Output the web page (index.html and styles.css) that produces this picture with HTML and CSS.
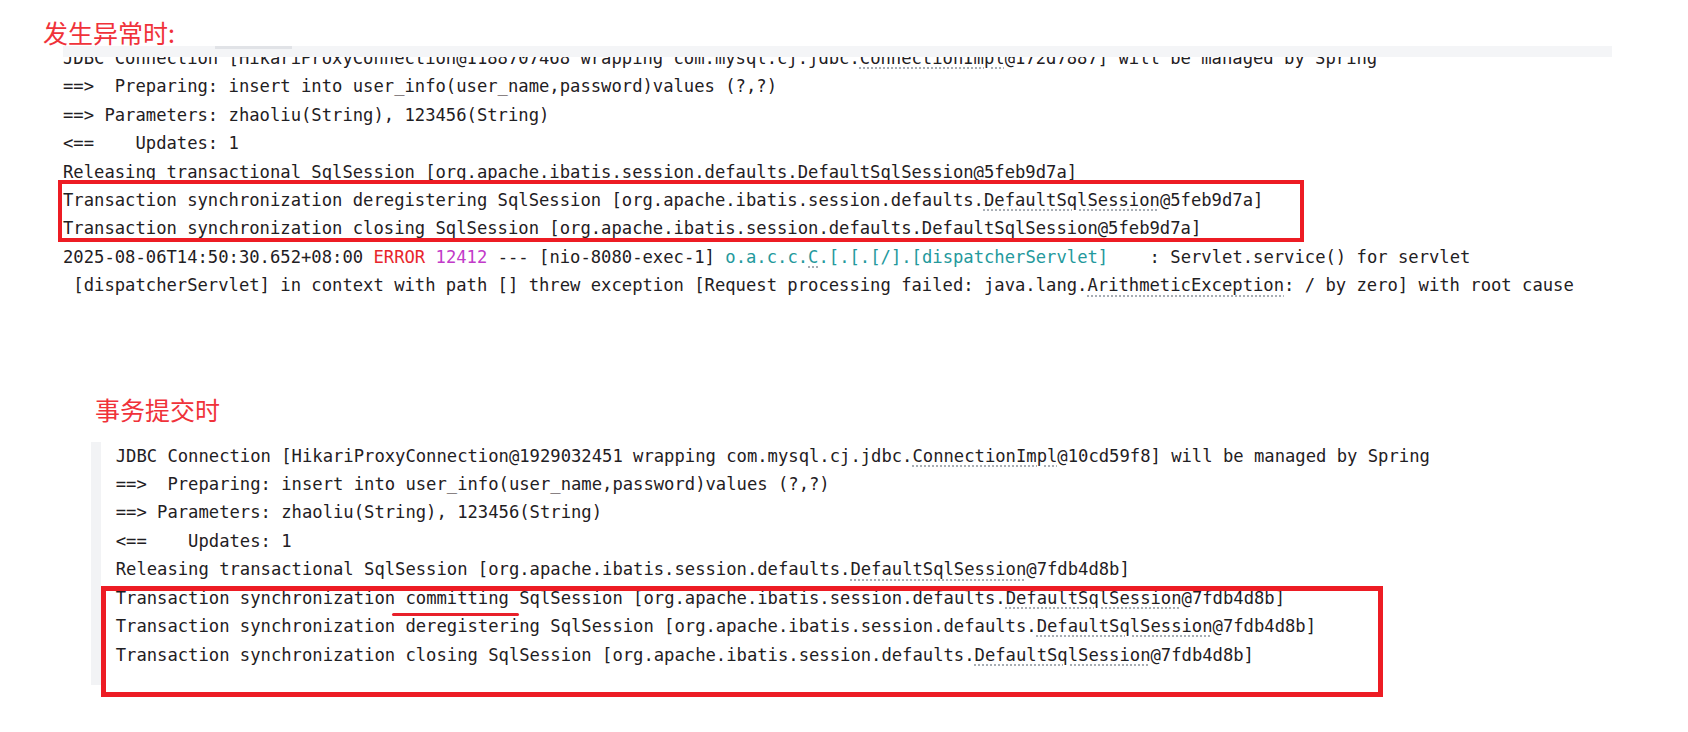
FILE: index.html
```html
<!DOCTYPE html>
<html lang="zh-CN">
<head>
    <meta charset="UTF-8">
    <meta name="viewport" content="width=device-width, initial-scale=1.0">
    <title>事务日志对比</title>
    <link rel="stylesheet" href="styles.css">
</head>
<body>

    <!-- 异常时的日志 -->
    <div class="section first">
        <div class="title">发生异常时:</div>
        <div class="log log-top">
            <div class="scroll-mask"><div class="thumb"></div></div>
            <div class="line">JDBC Connection [HikariProxyConnection@1188707468 wrapping com.mysql.cj.jdbc.<span class="link">ConnectionImpl</span>@172d7887] will be managed by Spring</div>
            <div class="line">==>  Preparing: insert into user_info(user_name,password)values (?,?)</div>
            <div class="line">==> Parameters: zhaoliu(String), 123456(String)</div>
            <div class="line">&lt;==    Updates: 1</div>
            <div class="line">Releasing transactional SqlSession [org.apache.ibatis.session.defaults.DefaultSqlSession@5feb9d7a]</div>
            <div class="line">Transaction synchronization deregistering SqlSession [org.apache.ibatis.session.defaults.<span class="link">DefaultSqlSession</span>@5feb9d7a]</div>
            <div class="line">Transaction synchronization closing SqlSession [org.apache.ibatis.session.defaults.DefaultSqlSession@5feb9d7a]</div>
            <div class="line">2025-08-06T14:50:30.652+08:00 <span class="lvl-error">ERROR</span> <span class="pid">12412</span> --- [nio-8080-exec-1] <span class="logger">o.a.c.c.<span class="link">C</span>.[.[.[/].[dispatcherServlet]</span>    : Servlet.service() for servlet</div>
            <div class="line"> [dispatcherServlet] in context with path [] threw exception [Request processing failed: java.lang.<span class="link">ArithmeticException</span>: / by zero] with root cause</div>
            <div class="box box-top"></div>
        </div>
    </div>

    <!-- 正常提交时的日志 -->
    <div class="section second">
        <div class="title">事务提交时</div>
        <div class="log log-bottom">
            <div class="line">JDBC Connection [HikariProxyConnection@1929032451 wrapping com.mysql.cj.jdbc.<span class="link">ConnectionImpl</span>@10cd59f8] will be managed by Spring</div>
            <div class="line">==>  Preparing: insert into user_info(user_name,password)values (?,?)</div>
            <div class="line">==> Parameters: zhaoliu(String), 123456(String)</div>
            <div class="line">&lt;==    Updates: 1</div>
            <div class="line">Releasing transactional SqlSession [org.apache.ibatis.session.defaults.<span class="link">DefaultSqlSession</span>@7fdb4d8b]</div>
            <div class="line">Transaction synchronization <span class="mark">committing</span> SqlSession [org.apache.ibatis.session.defaults.<span class="link">DefaultSqlSession</span>@7fdb4d8b]</div>
            <div class="line">Transaction synchronization deregistering SqlSession [org.apache.ibatis.session.defaults.<span class="link">DefaultSqlSession</span>@7fdb4d8b]</div>
            <div class="line">Transaction synchronization closing SqlSession [org.apache.ibatis.session.defaults.<span class="link">DefaultSqlSession</span>@7fdb4d8b]</div>
            <div class="box box-bottom"></div>
        </div>
    </div>

</body>
</html>
```

FILE: styles.css
```css
body {
    margin: 0;
    padding: 0 0 40px;
    background-color: #fff;
    color: #1f2023;
}
.title {
    font-family: "Noto Sans CJK SC", "Noto Sans", sans-serif;
    font-size: 25px;
    line-height: 24px;
    height: 24px;
    color: #f0323a;
}
.first {
    padding-top: 20px;
}
.first .title {
    margin-left: 43px;
}
.second {
    margin-top: 97px;
}
.second .title {
    margin-left: 95px;
    margin-bottom: 21px;
}
.log {
    position: relative;
    font-family: "DejaVu Sans Mono", "Liberation Mono", monospace;
    font-size: 17.2px;
    line-height: 28.4px;
}
.log .line {
    white-space: pre;
}
.log-top {
    margin-left: 63px;
}
.log-bottom {
    margin-left: 91px;
    border-left: 10px solid #f2f3f5;
    padding-left: 14.7px;
    padding-bottom: 16px;
}
/* grey strip hiding the top half of the first line */
.scroll-mask {
    position: absolute;
    left: 0;
    top: 2px;
    width: 1549px;
    height: 11px;
    background-color: #f4f5f7;
}
.scroll-mask .thumb {
    margin-left: 152px;
    width: 77px;
    height: 3px;
    background-color: #e1e3e7;
}
.link {
    text-decoration: underline dotted #9aa0a8;
    text-underline-offset: 4px;
}
.lvl-error {
    color: #e8262c;
}
.pid {
    color: #c23ac9;
}
.logger {
    color: #24999c;
}
.box {
    position: absolute;
    box-sizing: border-box;
    border: 4px solid #ed1c24;
}
.box-top {
    left: -5px;
    top: 136px;
    width: 1246px;
    height: 62px;
}
.box-bottom {
    left: 0;
    top: 144px;
    width: 1282px;
    height: 111px;
    border-width: 5px;
}
.mark {
    position: relative;
}
.mark::after {
    content: "";
    position: absolute;
    left: -13px;
    right: -10px;
    top: 25px;
    height: 3px;
    border-radius: 2px;
    background-color: #e8202a;
}
```
